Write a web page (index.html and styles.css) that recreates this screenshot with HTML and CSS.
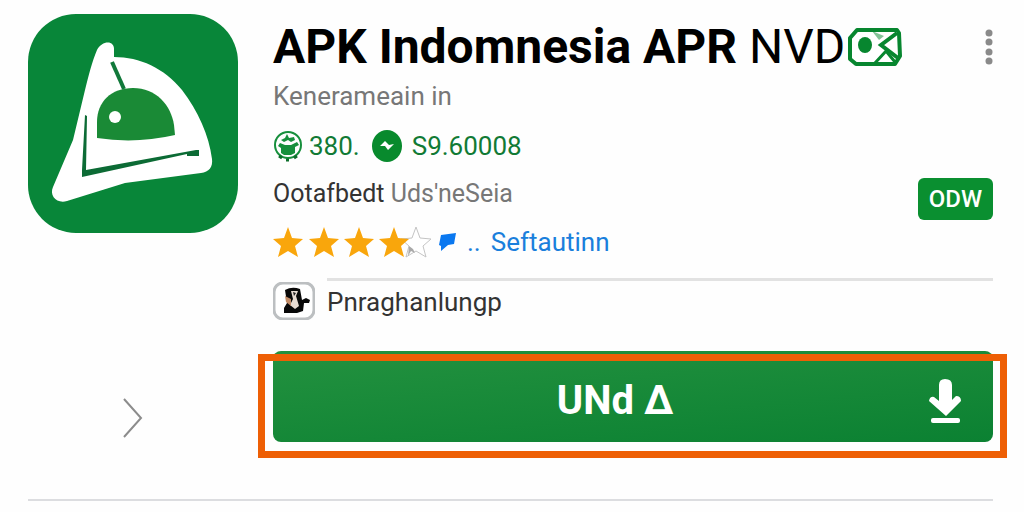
FILE: index.html
```html
<!DOCTYPE html>
<html lang="id">
<head>
    <meta charset="UTF-8">
    <meta name="viewport" content="width=device-width, initial-scale=1.0">
    <title>APK Indomnesia APR</title>
    <link rel="stylesheet" href="styles.css">
</head>
<body>
    <main class="app">
        <aside class="side">
            <svg class="app-icon" viewBox="0 0 210 219" aria-hidden="true">
                <rect width="210" height="219" rx="48" fill="#088639"/>
                <path d="M69 36C74 26 87 26 86 36L86 43C112 43 136 54 154 76C170 97 181 121 184 145C185 153 181 158 173 159L97 169L39 187C29 190 21 182 25 173L45 126L57 76C61 60 64 48 69 36Z" fill="#fff"/>
                <path d="M69 124V108C69 88 83 74 105 74C128 74 143 91 146 111L147 121Q108 130 69 124Z" fill="#1a8a36"/>
                <path d="M84 48L96 75" stroke="#11793a" stroke-width="4"/>
                <path d="M57 101L59 102L58 156L168 136L171 136V142H159V140L54 163V156Z" fill="#0c6b35"/>
                <circle cx="87" cy="103" r="6" fill="#fff"/>
            </svg>
            <a class="next" href="#more" aria-label="Lainnya">
                <svg width="20" height="40" viewBox="0 0 20 40" aria-hidden="true">
                    <path d="M1 1L18 20L1 39" fill="none" stroke="#8c8c8c" stroke-width="2"/>
                </svg>
            </a>
        </aside>

        <div class="details">
            <header class="heading">
                <h1 class="title">APK Indomnesia APR <span class="thin">NVD</span></h1>
                <svg class="camera" width="54" height="38" viewBox="0 0 54 38" aria-hidden="true">
                    <path d="M9 2H49L51 5L52 28L47 36H8L2 31V10Z" fill="#fff" stroke="#07862f" stroke-width="4" stroke-linejoin="round"/>
                    <path d="M49 5L33 17L50 30" fill="none" stroke="#07862f" stroke-width="4"/>
                    <path d="M39 22L27 35M38 23L47 34" fill="none" stroke="#07862f" stroke-width="3"/>
                    <path d="M24 3L36 8L31 12Z" fill="#07862f" opacity="0.5"/>
                    <ellipse cx="17" cy="17" rx="7" ry="8" fill="#07862f"/>
                </svg>
                <button class="menu" type="button" aria-label="Menu">
                    <svg width="8" height="36" viewBox="0 0 8 36" fill="#8a8a8a" aria-hidden="true">
                        <circle cx="4" cy="4" r="3.5"/>
                        <circle cx="4" cy="13" r="3.5"/>
                        <circle cx="4" cy="23" r="3.5"/>
                        <circle cx="4" cy="32" r="3.5"/>
                    </svg>
                </button>
            </header>

            <p class="subtitle">Kenerameain in</p>

            <div class="middle">
                <div class="facts">
                    <div class="stats">
                        <svg width="30" height="32" viewBox="0 0 30 32" aria-hidden="true">
                            <circle cx="15" cy="15" r="13" fill="none" stroke="#168f3c" stroke-width="2"/>
                            <path d="M7 13L12 15H18L24 12L26 15L22 17V23L18 25H11L8 23V18L5 16Z" fill="#168f3c"/>
                            <path d="M8 10L12 8L14 4L16 8L21 7L22 10L18 12L15 10L11 12Z" fill="#168f3c"/>
                            <path d="M6 26L9 28M13 30H16M21 28L24 26" stroke="#0d6e2b" stroke-width="3"/>
                        </svg>
                        <span class="count">380.</span>
                        <svg width="30" height="32" viewBox="0 0 30 32" aria-hidden="true">
                            <ellipse cx="15" cy="16" rx="15" ry="16" fill="#088a2d"/>
                            <path d="M8 16L13 11L17 15L22 14L16 20L13 16Z" fill="#fff"/>
                        </svg>
                        <span class="price">S9.60008</span>
                    </div>
                    <p class="status">Ootafbedt <span class="faded">Uds'neSeia</span></p>
                </div>
                <button class="badge" type="button">ODW</button>
            </div>

            <div class="rating">
                <svg width="158" height="32" viewBox="0 0 158 32" role="img" aria-label="4">
                    <defs>
                        <path id="star" d="M15 0L19 11L30 12L22 19L25 30L15 24L5 30L8 19L0 12L11 11Z"/>
                    </defs>
                    <use href="#star" x="128" y="1" fill="#fff" stroke="#c4c4c4" stroke-width="1"/>
                    <g fill="#f9a60c">
                        <use href="#star" y="1"/>
                        <use href="#star" x="36" y="1"/>
                        <use href="#star" x="71" y="1"/>
                        <use href="#star" x="106" y="1"/>
                    </g>
                    <path d="M136 20L140 23L142 27L138 25L135 30Z" fill="#a9a9a9"/>
                </svg>
                <svg class="flag" width="18" height="18" viewBox="0 0 18 18" aria-hidden="true">
                    <path d="M2 2L17 0L15 11L9 12L2 18V13L0 12Z" fill="#0a78f0"/>
                </svg>
                <span class="dots">..</span>
                <a class="link" href="#reviews">Seftautinn</a>
            </div>

            <div class="publisher">
                <svg class="avatar" width="42" height="38" viewBox="0 0 42 38" aria-hidden="true">
                    <rect x="1" y="1" width="40" height="36" rx="9" fill="#fff" stroke="#bcbfc1" stroke-width="3"/>
                    <path d="M12 8Q19 4 27 7L29 18L33 16L37 18L36 21L31 21L30 29L24 31L11 31V26L14 21Z" fill="#080808"/>
                    <path d="M18 9L25 9L23 14L26 24L22 27L17 23L20 17Z" fill="#e8dcd2"/>
                    <path d="M20 10L23 11L21 14Z" fill="#222"/>
                    <path d="M12 14L18 17L18 24L13 20Z" fill="#c08a66"/>
                </svg>
                <p class="publisher-name">Pnraghanlungp</p>
            </div>

            <div class="install">
                <button class="install-button" type="button">
                    <span class="install-label">UNd Δ</span>
                    <svg class="download" width="32" height="44" viewBox="0 0 32 44" aria-hidden="true">
                        <path d="M10 6Q10 0 16 0Q23 0 23 6V21L27 17Q32 17 32 22L17 37L0 22Q1 17 5 18L10 22Z" fill="#fff"/>
                        <rect x="2" y="39" width="29" height="5" rx="2" fill="#fff"/>
                    </svg>
                </button>
            </div>
        </div>
    </main>
    <hr class="divider">
</body>
</html>
```

FILE: styles.css
```css
* {
    box-sizing: border-box;
}

body {
    margin: 0;
    padding: 14px 31px 0 28px;
    background: #fefefe;
    color: #333;
    font-family: Roboto, "Liberation Sans", sans-serif;
}

h1, p {
    margin: 0;
    font-weight: 400;
}

button {
    border: 0;
    padding: 0;
    font-family: inherit;
    cursor: pointer;
}

svg {
    display: block;
    flex: none;
}

.app {
    display: grid;
    grid-template-columns: 210px 1fr;
    gap: 35px;
}

.side {
    display: flex;
    flex-direction: column;
    align-items: center;
    justify-content: space-between;
    padding-bottom: 4px;
}

.app-icon {
    width: 100%;
}

.heading {
    display: flex;
    align-items: center;
    height: 66px;
}

.title {
    color: #000;
    font-size: 48px;
    font-weight: 700;
    line-height: 66px;
    white-space: nowrap;
}

.title .thin {
    font-weight: 400;
}

.camera {
    margin-left: 3px;
}

.menu {
    margin-left: auto;
    background: none;
}

.subtitle {
    color: #777;
    font-size: 26px;
    line-height: 32px;
}

.middle {
    display: flex;
    align-items: flex-end;
    justify-content: space-between;
    padding-top: 18px;
}

.stats {
    display: flex;
    align-items: center;
    color: #117a35;
    font-size: 26px;
    line-height: 32px;
}

.count {
    margin: 0 12px 0 6px;
}

.price {
    margin-left: 10px;
}

.status {
    padding: 16px 0 10px;
    font-size: 25px;
    line-height: 32px;
}

.faded {
    color: #777;
}

.badge {
    width: 75px;
    height: 42px;
    border-radius: 6px;
    background: #0a8f30;
    color: #fff;
    font-size: 24px;
    font-weight: 500;
}

.rating {
    display: flex;
    align-items: center;
    height: 44px;
    color: #1a7fdc;
    font-size: 26px;
}

.flag {
    margin-left: 8px;
}

.dots {
    margin: 0 10px;
}

.link {
    color: inherit;
    text-decoration: none;
}

.publisher {
    display: flex;
    align-items: center;
    gap: 12px;
    padding-top: 14px;
}

.publisher-name {
    flex: 1;
    border-top: 3px solid #e2e2e2;
    font-size: 26px;
    line-height: 42px;
}

.install {
    position: relative;
    margin-top: 28px;
}

/* highlight frame, drawn over the top edge of the button */
.install::after {
    content: "";
    position: absolute;
    top: 3px;
    right: -14px;
    bottom: -16px;
    left: -15px;
    border: 7px solid #ee5f05;
    pointer-events: none;
}

.install-button {
    display: flex;
    align-items: center;
    width: 100%;
    height: 91px;
    padding: 8px 32px 0 28px;
    border-radius: 8px;
    background: linear-gradient(175deg, #23913f, #0b8132);
    color: #fff;
}

.install-label {
    flex: 1;
    font-size: 40px;
    font-weight: 700;
}

.divider {
    height: 2px;
    margin: 57px 0 0;
    border: 0;
    background: #dcdde0;
}
```
